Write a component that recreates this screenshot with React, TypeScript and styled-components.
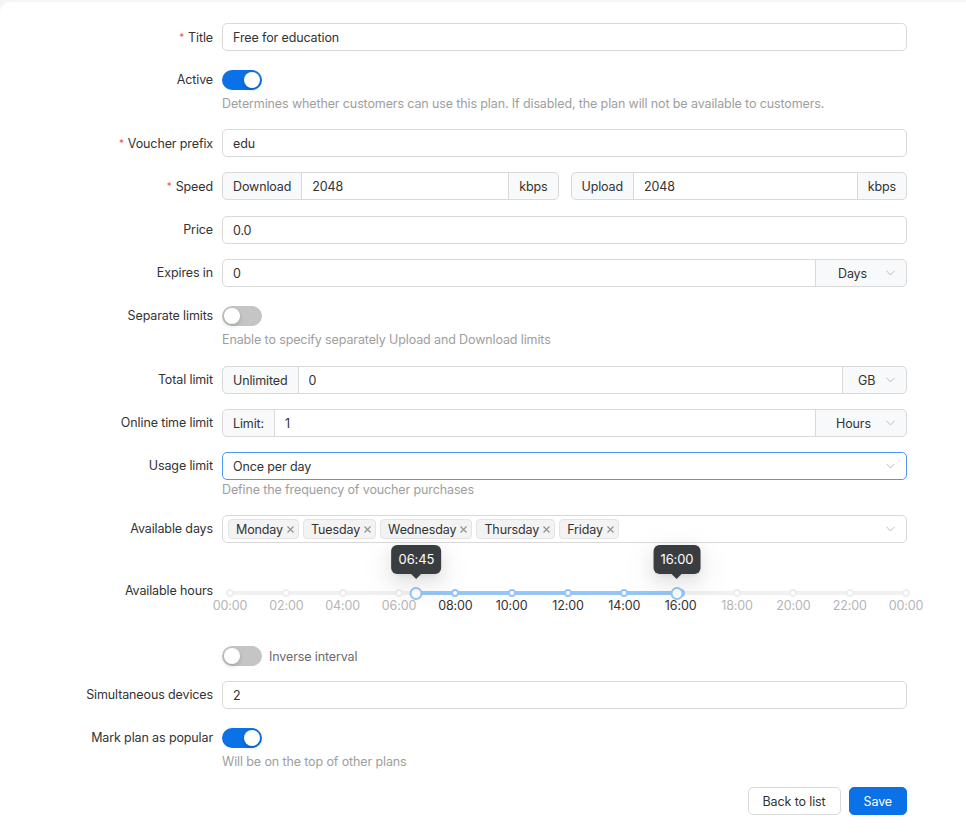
import React from 'react';
import styled, { createGlobalStyle, css } from 'styled-components';

const BLUE = '#0a71e6';

const GlobalStyle = createGlobalStyle`
  html, body { margin: 0; padding: 0; }
  body {
    background: #f4f5f7;
    font-family: Inter, "Noto Sans", "Liberation Sans", sans-serif;
    font-size: 12.5px;
    letter-spacing: -0.12px;
    color: #333;
    overflow: hidden;
  }
  * { box-sizing: border-box; }
`;

const Page = styled.div`
  padding-top: 2px;
`;

const Card = styled.div`
  background: #fff;
  border-top-left-radius: 10px;
  min-height: 834px;
  padding-top: 21px;
`;

const Form = styled.form`
  width: 907px;
  margin: 0;
`;

const Item = styled.div<{ $mb?: number }>`
  display: grid;
  grid-template-columns: 213px 685px;
  column-gap: 9px;
  margin-bottom: ${(p) => p.$mb ?? 15}px;
`;

const Label = styled.label<{ $h?: number }>`
  text-align: right;
  line-height: ${(p) => p.$h ?? 28}px;
  height: ${(p) => p.$h ?? 28}px;
  white-space: nowrap;
  color: #333;
`;

const Star = styled.span`
  color: #ff4d4f;
  margin-right: 4px;
  font-size: 10px;
  vertical-align: 1px;
`;

const Control = styled.div`
  display: flex;
  flex-direction: column;
  min-width: 0;
`;

const Help = styled.div`
  color: #9e9e9e;
  line-height: 20px;
`;

const fieldBase = css`
  height: 28px;
  border: 1px solid #d9d9d9;
  font: inherit;
  letter-spacing: inherit;
  color: #333;
  background: #fff;
`;

const TextInput = styled.input`
  ${fieldBase};
  width: 100%;
  border-radius: 5px;
  padding: 0 10px;
  outline: none;
`;

const Group = styled.div`
  display: flex;
  height: 28px;
  & > * {
    border-radius: 0;
  }
  & > *:first-child {
    border-radius: 5px 0 0 5px;
  }
  & > *:last-child {
    border-radius: 0 5px 5px 0;
  }
  & > * + * {
    margin-left: -1px;
  }
`;

const GroupInput = styled(TextInput)`
  flex: 1;
  min-width: 0;
`;

const Addon = styled.span`
  ${fieldBase};
  display: flex;
  align-items: center;
  padding: 0 10px;
  background: #f8f9fa;
  white-space: nowrap;
  flex-shrink: 0;
`;

const UnitSelect = styled.span<{ $w: number; $pl: number }>`
  ${fieldBase};
  display: flex;
  align-items: center;
  justify-content: space-between;
  width: ${(p) => p.$w}px;
  padding: 0 11px 0 ${(p) => p.$pl}px;
  background: #f8f9fa;
  flex-shrink: 0;
`;

const SpeedGrid = styled.div`
  display: grid;
  grid-template-columns: 1fr 1fr;
  column-gap: 12px;
`;

const SelectBox = styled.div<{ $focused?: boolean }>`
  ${fieldBase};
  border-radius: 5px;
  border-color: ${(p) => (p.$focused ? '#4b97f7' : '#d9d9d9')};
  display: flex;
  align-items: center;
  justify-content: space-between;
  padding: 0 11px 0 10px;
`;

const MultiBox = styled.div`
  ${fieldBase};
  border-radius: 5px;
  display: flex;
  align-items: center;
  justify-content: space-between;
  padding: 0 11px 0 5px;
`;

const Tags = styled.div`
  display: flex;
  gap: 4px;
`;

const Tag = styled.span`
  display: inline-flex;
  align-items: center;
  gap: 4px;
  height: 20px;
  padding: 0 4px 0 7px;
  background: #f3f3f3;
  border: 1px solid #e4e4e4;
  border-radius: 4px;
  color: #333;
`;

const ChevronSvg = styled.svg`
  flex-shrink: 0;
  display: block;
`;

const Chevron = () => (
  <ChevronSvg width="9" height="6" viewBox="0 0 9 6">
    <path d="M0.5 0.8L4.5 5L8.5 0.8" fill="none" stroke="#bdbdbd" strokeWidth="1" />
  </ChevronSvg>
);

const CloseSvg = styled.svg`
  display: block;
`;

const CloseX = () => (
  <CloseSvg width="7" height="7" viewBox="0 0 7 7">
    <path d="M0.5 0.5L6.5 6.5M6.5 0.5L0.5 6.5" stroke="#8f8f8f" strokeWidth="1.1" />
  </CloseSvg>
);

const SwitchRow = styled.div<{ $h?: number }>`
  display: flex;
  align-items: center;
  gap: 7px;
  height: ${(p) => p.$h ?? 28}px;
`;

const Switch = styled.span<{ $on?: boolean }>`
  position: relative;
  display: inline-block;
  width: 40px;
  height: 20px;
  border-radius: 10px;
  background: ${(p) => (p.$on ? BLUE : '#c5c5c5')};
  flex-shrink: 0;
  &::after {
    content: '';
    position: absolute;
    top: 2px;
    left: ${(p) => (p.$on ? 22 : 2)}px;
    width: 16px;
    height: 16px;
    border-radius: 50%;
    background: #fff;
    box-shadow: 0 2px 4px rgba(0, 35, 11, 0.2);
  }
`;

const InverseText = styled.span`
  color: #6b6b6b;
`;

/* ---------- Slider ---------- */

const SliderBox = styled.div`
  position: relative;
  height: 54px;
  margin-left: 8px;
  margin-right: 1px;
`;

const Rail = styled.div`
  position: absolute;
  left: 0;
  right: 0;
  top: 14px;
  height: 4px;
  border-radius: 2px;
  background: #f0f0f0;
`;

const Track = styled.div`
  position: absolute;
  top: 14px;
  height: 4px;
  border-radius: 2px;
  background: #95c6f8;
`;

const Dot = styled.span<{ $active?: boolean }>`
  position: absolute;
  top: 12px;
  width: 8px;
  height: 8px;
  border-radius: 50%;
  background: #fff;
  border: 2px solid ${(p) => (p.$active ? '#95c6f8' : '#ededed')};
  transform: translateX(-50%);
`;

const Handle = styled.span`
  position: absolute;
  top: 10px;
  width: 13px;
  height: 13px;
  border-radius: 50%;
  background: #fff;
  border: 2px solid #95c6f8;
  transform: translateX(-50%);
`;

const Mark = styled.span<{ $active?: boolean }>`
  position: absolute;
  top: 20px;
  line-height: 18px;
  transform: translateX(-50%);
  color: ${(p) => (p.$active ? '#333' : '#b5b5b5')};
  white-space: nowrap;
`;

const Tooltip = styled.span`
  position: absolute;
  top: -32px;
  height: 29px;
  line-height: 29px;
  padding: 0 7px;
  border-radius: 6px;
  background: #3a3d40;
  color: #fff;
  font-size: 13px;
  transform: translateX(-50%);
  white-space: nowrap;
  box-shadow: 0 6px 16px rgba(0, 0, 0, 0.08), 0 3px 6px -4px rgba(0, 0, 0, 0.12),
    0 9px 28px 8px rgba(0, 0, 0, 0.05);
  &::after {
    content: '';
    position: absolute;
    left: 50%;
    bottom: -5px;
    transform: translateX(-50%);
    border-left: 5px solid transparent;
    border-right: 5px solid transparent;
    border-top: 5px solid #3a3d40;
  }
`;

const Actions = styled.div`
  display: flex;
  justify-content: flex-end;
  gap: 8px;
`;

const Button = styled.button<{ $primary?: boolean }>`
  height: 28px;
  padding: 0 14px;
  border-radius: 5px;
  font: inherit;
  letter-spacing: inherit;
  border: 1px solid ${(p) => (p.$primary ? BLUE : '#d9d9d9')};
  background: ${(p) => (p.$primary ? BLUE : '#fff')};
  color: ${(p) => (p.$primary ? '#fff' : '#333')};
  cursor: pointer;
`;

const pad = (n: number) => String(n).padStart(2, '0');
const fmt = (m: number) => `${pad(Math.floor(m / 60) % 24)}:${pad(m % 60)}`;

const HOURS_SLIDER_OFFSET = '3.7px';

const HoursSlider: React.FC<{ start: number; end: number }> = ({ start, end }) => {
  const pct = (m: number) => (m / 1440) * 100;
  const marks = Array.from({ length: 13 }, (_, i) => i * 120);
  const pos = (m: number) => `calc(${pct(m)}% - ${HOURS_SLIDER_OFFSET})`;
  return (
    <SliderBox>
      <Rail />
      <Track style={{ left: pos(start), width: `${pct(end) - pct(start)}%` }} />
      {marks.map((m) => (
        <Dot key={`d${m}`} $active={m >= start && m <= end} style={{ left: `${pct(m)}%` }} />
      ))}
      {marks.map((m) => (
        <Mark key={`m${m}`} $active={m >= start && m <= end} style={{ left: `${pct(m)}%` }}>
          {fmt(m)}
        </Mark>
      ))}
      <Handle style={{ left: pos(start) }} />
      <Handle style={{ left: pos(end) }} />
      <Tooltip style={{ left: pos(start) }}>{fmt(start)}</Tooltip>
      <Tooltip style={{ left: pos(end) }}>{fmt(end)}</Tooltip>
    </SliderBox>
  );
};

const days = ['Monday', 'Tuesday', 'Wednesday', 'Thursday', 'Friday'];

export default function App() {
  return (
    <>
      <GlobalStyle />
      <Page>
        <Card>
          <Form onSubmit={(e) => e.preventDefault()}>
            <Item>
              <Label>
                <Star>*</Star>Title
              </Label>
              <Control>
                <TextInput defaultValue="Free for education" />
              </Control>
            </Item>

            <Item>
              <Label>Active</Label>
              <Control>
                <SwitchRow>
                  <Switch $on />
                </SwitchRow>
                <Help>
                  Determines whether customers can use this plan. If disabled, the plan will not be
                  available to customers.
                </Help>
              </Control>
            </Item>

            <Item>
              <Label>
                <Star>*</Star>Voucher prefix
              </Label>
              <Control>
                <TextInput defaultValue="edu" />
              </Control>
            </Item>

            <Item $mb={16}>
              <Label>
                <Star>*</Star>Speed
              </Label>
              <SpeedGrid>
                <Group>
                  <Addon>Download</Addon>
                  <GroupInput defaultValue="2048" />
                  <Addon>kbps</Addon>
                </Group>
                <Group>
                  <Addon>Upload</Addon>
                  <GroupInput defaultValue="2048" />
                  <Addon>kbps</Addon>
                </Group>
              </SpeedGrid>
            </Item>

            <Item>
              <Label>Price</Label>
              <Control>
                <TextInput defaultValue="0.0" />
              </Control>
            </Item>

            <Item>
              <Label>Expires in</Label>
              <Group>
                <GroupInput defaultValue="0" />
                <UnitSelect $w={92} $pl={22}>
                  Days
                  <Chevron />
                </UnitSelect>
              </Group>
            </Item>

            <Item $mb={16}>
              <Label>Separate limits</Label>
              <Control>
                <SwitchRow>
                  <Switch />
                </SwitchRow>
                <Help>Enable to specify separately Upload and Download limits</Help>
              </Control>
            </Item>

            <Item>
              <Label>Total limit</Label>
              <Group>
                <Addon>Unlimited</Addon>
                <GroupInput defaultValue="0" />
                <UnitSelect $w={65} $pl={15}>
                  GB
                  <Chevron />
                </UnitSelect>
              </Group>
            </Item>

            <Item>
              <Label>Online time limit</Label>
              <Group>
                <Addon>Limit:</Addon>
                <GroupInput defaultValue="1" />
                <UnitSelect $w={92} $pl={20}>
                  Hours
                  <Chevron />
                </UnitSelect>
              </Group>
            </Item>

            <Item>
              <Label>Usage limit</Label>
              <Control>
                <SelectBox $focused>
                  Once per day
                  <Chevron />
                </SelectBox>
                <Help>Define the frequency of voucher purchases</Help>
              </Control>
            </Item>

            <Item $mb={34}>
              <Label>Available days</Label>
              <Control>
                <MultiBox>
                  <Tags>
                    {days.map((d) => (
                      <Tag key={d}>
                        {d}
                        <CloseX />
                      </Tag>
                    ))}
                  </Tags>
                  <Chevron />
                </MultiBox>
              </Control>
            </Item>

            <Item>
              <Label>Available hours</Label>
              <Control>
                <HoursSlider start={405} end={960} />
              </Control>
            </Item>

            <Item>
              <Label $h={20} />
              <SwitchRow $h={20}>
                <Switch />
                <InverseText>Inverse interval</InverseText>
              </SwitchRow>
            </Item>

            <Item>
              <Label>Simultaneous devices</Label>
              <Control>
                <TextInput defaultValue="2" />
              </Control>
            </Item>

            <Item>
              <Label>Mark plan as popular</Label>
              <Control>
                <SwitchRow>
                  <Switch $on />
                </SwitchRow>
                <Help>Will be on the top of other plans</Help>
              </Control>
            </Item>

            <Actions>
              <Button type="button">Back to list</Button>
              <Button type="submit" $primary>
                Save
              </Button>
            </Actions>
          </Form>
        </Card>
      </Page>
    </>
  );
}
